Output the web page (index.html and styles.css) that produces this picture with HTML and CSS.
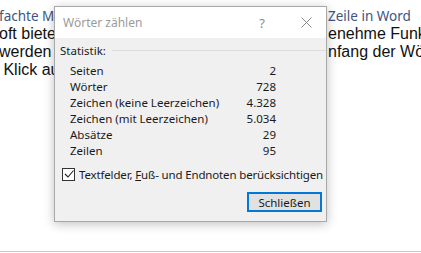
FILE: index.html
```html
<!DOCTYPE html>
<html lang="de">
<head>
    <meta charset="UTF-8">
    <title>Wörter zählen</title>
    <link rel="stylesheet" href="styles.css">
</head>
<body>
    <div class="page">
        <div class="doc">
            <div class="line heading">
                <span class="left">fachte Methode</span>
                <span class="right">Zeile in Word</span>
            </div>
            <div class="line">
                <span class="left">oft bietet Word</span>
                <span class="right">enehme Funktionen</span>
            </div>
            <div class="line">
                <span class="left">werden im Text</span>
                <span class="right">nfang der Wörter</span>
            </div>
            <div class="line">
                <span class="left">&nbsp;Klick auf die</span>
                <span class="right"></span>
            </div>
        </div>
        <div class="rule"></div>
    </div>

    <div class="dialog">
        <div class="titlebar">
            <span class="title">Wörter zählen</span>
            <span class="help">?</span>
            <svg class="close" width="11" height="11" viewBox="0 0 11 11">
                <path d="M0.5 0.5 L10.5 10.5 M10.5 0.5 L0.5 10.5" stroke="#8a8a8a" stroke-width="1" fill="none"/>
            </svg>
        </div>
        <div class="content">
            <div class="group-label">
                <span>Statistik:</span>
                <span class="group-line"></span>
            </div>
            <div class="stats">
                <span>Seiten</span><span class="num">2</span>
                <span>Wörter</span><span class="num">728</span>
                <span>Zeichen (keine Leerzeichen)</span><span class="num">4.328</span>
                <span>Zeichen (mit Leerzeichen)</span><span class="num">5.034</span>
                <span>Absätze</span><span class="num">29</span>
                <span>Zeilen</span><span class="num">95</span>
            </div>
            <label class="check">
                <span class="box">
                    <svg width="10" height="10" viewBox="0 0 10 10">
                        <path d="M1 5 L4 8 L9.5 1.5" stroke="#222" stroke-width="1.1" fill="none"/>
                    </svg>
                </span>
                <span class="check-text">Textfelder, <u>F</u>uß- und Endnoten berücksichtigen</span>
            </label>
            <div class="actions">
                <button class="btn">Schließen</button>
            </div>
        </div>
    </div>
</body>
</html>
```

FILE: styles.css
```css
body {
    margin: 0;
    background-color: #fff;
    font-family: "Liberation Sans", Arial, sans-serif;
}

.page {
    width: 421px;
    height: 253px;
    overflow: hidden;
    display: flex;
    flex-direction: column;
}

.doc {
    padding-top: 7px;
    height: 244px;
}

.line {
    display: grid;
    grid-template-columns: 328px 1fr;
    white-space: nowrap;
    overflow: hidden;
    font-size: 16px;
    line-height: 18px;
    color: #111;
}

.line .left {
    margin-left: -1px;
}

.heading {
    font-family: "Noto Sans", sans-serif;
    font-size: 13.5px;
    line-height: 18px;
    color: #3d5580;
}

.rule {
    height: 1px;
    background-color: #c8c8c8;
}

/* dialog window */
.dialog {
    position: absolute;
    left: 54px;
    top: 6px;
    width: 271px;
    height: 214px;
    border: 1px solid #a8a8a8;
    box-shadow: 0 2px 10px rgba(0,0,0,0.25);
    background-color: #f0f0f0;
    font-family: "Noto Sans", sans-serif;
    font-size: 11.5px;
    color: #1a1a1a;
    display: flex;
    flex-direction: column;
}

.titlebar {
    height: 31px;
    background-color: #fff;
    display: flex;
    align-items: center;
    padding-left: 8px;
}

.title {
    flex: 1;
    color: #9a9a9a;
    font-size: 12px;
}

.help {
    color: #8a8a8a;
    font-size: 13px;
    margin-right: 36px;
}

.close {
    margin-right: 14px;
}

.content {
    flex: 1;
    padding: 4px 0 0 5px;
    display: flex;
    flex-direction: column;
}

.group-label {
    display: flex;
    align-items: center;
    gap: 6px;
    height: 16px;
}

.group-line {
    flex: 1;
    height: 1px;
    background-color: #dcdcdc;
}

.stats {
    display: grid;
    grid-template-columns: 1fr auto;
    width: 206px;
    margin: 5px 0 0 10px;
    line-height: 16px;
}

.num {
    text-align: right;
}

.check {
    display: flex;
    align-items: center;
    gap: 4px;
    margin: 7px 0 0 2px;
    height: 16px;
    white-space: nowrap;
}

.check-text {
    letter-spacing: -0.15px;
}

.box {
    flex: none;
    width: 11px;
    height: 11px;
    border: 1px solid #333;
    background-color: #fff;
    display: flex;
    align-items: center;
    justify-content: center;
}

.actions {
    display: flex;
    justify-content: flex-end;
    padding-right: 4px;
    margin-top: 10px;
}

.btn {
    width: 75px;
    height: 20px;
    padding: 0;
    border: 2px solid #0078d7;
    background-color: #e1e1e1;
    font-family: "Noto Sans", sans-serif;
    font-size: 11.5px;
    color: #1a1a1a;
}
```
